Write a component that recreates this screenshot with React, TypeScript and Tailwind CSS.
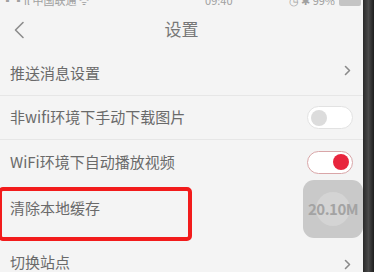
import React from "react";

const font = { fontFamily: '"Noto Sans CJK SC", "Noto Sans", sans-serif' };

const Chevron: React.FC = () => (
  <svg width="7" height="11" viewBox="0 0 7 11" fill="none">
    <path d="M1.5 1.5 L5.5 5.5 L1.5 9.5" stroke="#8a8a8a" strokeWidth="1.6" strokeLinecap="round" strokeLinejoin="round" />
  </svg>
);

const Toggle: React.FC<{ on?: boolean }> = ({ on }) => (
  <div
    className={
      on
        ? "w-[46px] h-[23px] rounded-full border-[1.5px] border-[#d9a6a8] bg-white flex items-center justify-end px-[3px]"
        : "w-[46px] h-[23px] rounded-full border-[1.5px] border-[#e2e2e2] bg-white flex items-center justify-start px-[3px]"
    }
  >
    <div className={on ? "w-[16px] h-[16px] rounded-full bg-[#e8253d]" : "w-[16px] h-[16px] rounded-full bg-[#dcdcdc]"} />
  </div>
);

const Row: React.FC<{ label: string; right?: React.ReactNode; border?: boolean; h: string }> = ({ label, right, border = true, h }) => (
  <div className={`${h} shrink-0 flex items-center justify-between pl-[10px] pr-[10px] ${border ? "border-b border-[#e6e6e6]" : ""}`}>
    <span className="text-[15px] text-[#6a6a6a]">{label}</span>
    {right}
  </div>
);

export default function App() {
  return (
    <div className="w-[374px] h-[272px] flex overflow-hidden bg-[#f4f4f4]" style={font}>
      <div className="flex-1 relative flex flex-col">
        {/* status bar, mostly cut off at the top of the shot */}
        <div className="h-[9px] shrink-0 overflow-hidden">
          <div className="-mt-[8px] h-[17px] flex items-center justify-between px-[2px] text-[11px] leading-none text-[#a0a0a0]">
            <span>▪▪ıl 中国联通 ᯤ</span>
            <span className="ml-[60px]">09:40</span>
            <span className="flex items-center gap-[4px]">
              ◷ ✱ 99%
              <span className="w-[22px] h-[10px] rounded-[2px] bg-[#c4c4c4]" />
            </span>
          </div>
        </div>
        <div className="h-[40px] shrink-0 flex items-center justify-center relative">
          <svg className="absolute left-[13px] top-[12px]" width="12" height="18" viewBox="0 0 12 18" fill="none">
            <path d="M10 1.5 L2.5 9 L10 16.5" stroke="#8c8c8c" strokeWidth="1.6" strokeLinecap="round" strokeLinejoin="round" />
          </svg>
          <span className="text-[17px] text-[#777]">设置</span>
        </div>
        <div className="h-[3px] shrink-0" />
        <Row h="h-[44px]" label="推送消息设置" right={<span className="mr-[2px] -mt-[6px]"><Chevron /></span>} />
        <Row h="h-[44px]" label="非wifi环境下手动下载图片" right={<Toggle />} />
        <Row h="h-[44px]" label="WiFi环境下自动播放视频" right={<Toggle on />} border={false} />
        <Row h="h-[49px]" label="清除本地缓存" border={false} />
        <Row h="h-[59px]" label="切换站点" right={<span className="mr-[2px] mt-[4px]"><Chevron /></span>} border={false} />

        <div className="absolute left-[-2px] top-[187px] w-[194px] h-[54px] border-[4px] border-[#f21b1b] rounded-[5px]" />
        <div className="absolute left-[303px] top-[180px] w-[60px] h-[58px] rounded-[11px] bg-[#c9c9c9] flex items-center justify-center overflow-hidden">
          <div className="absolute w-[34px] h-[34px] rounded-full bg-[#d4d4d4]" />
          <span className="relative text-[15px] font-bold text-[#a3a3a3] tracking-[-0.5px]">20.10M</span>
        </div>
      </div>
      <div className="w-[11px] shrink-0 bg-gradient-to-r from-[#2a2a2a] via-[#4a4a4a] to-[#1e1e1e]" />
    </div>
  );
}
